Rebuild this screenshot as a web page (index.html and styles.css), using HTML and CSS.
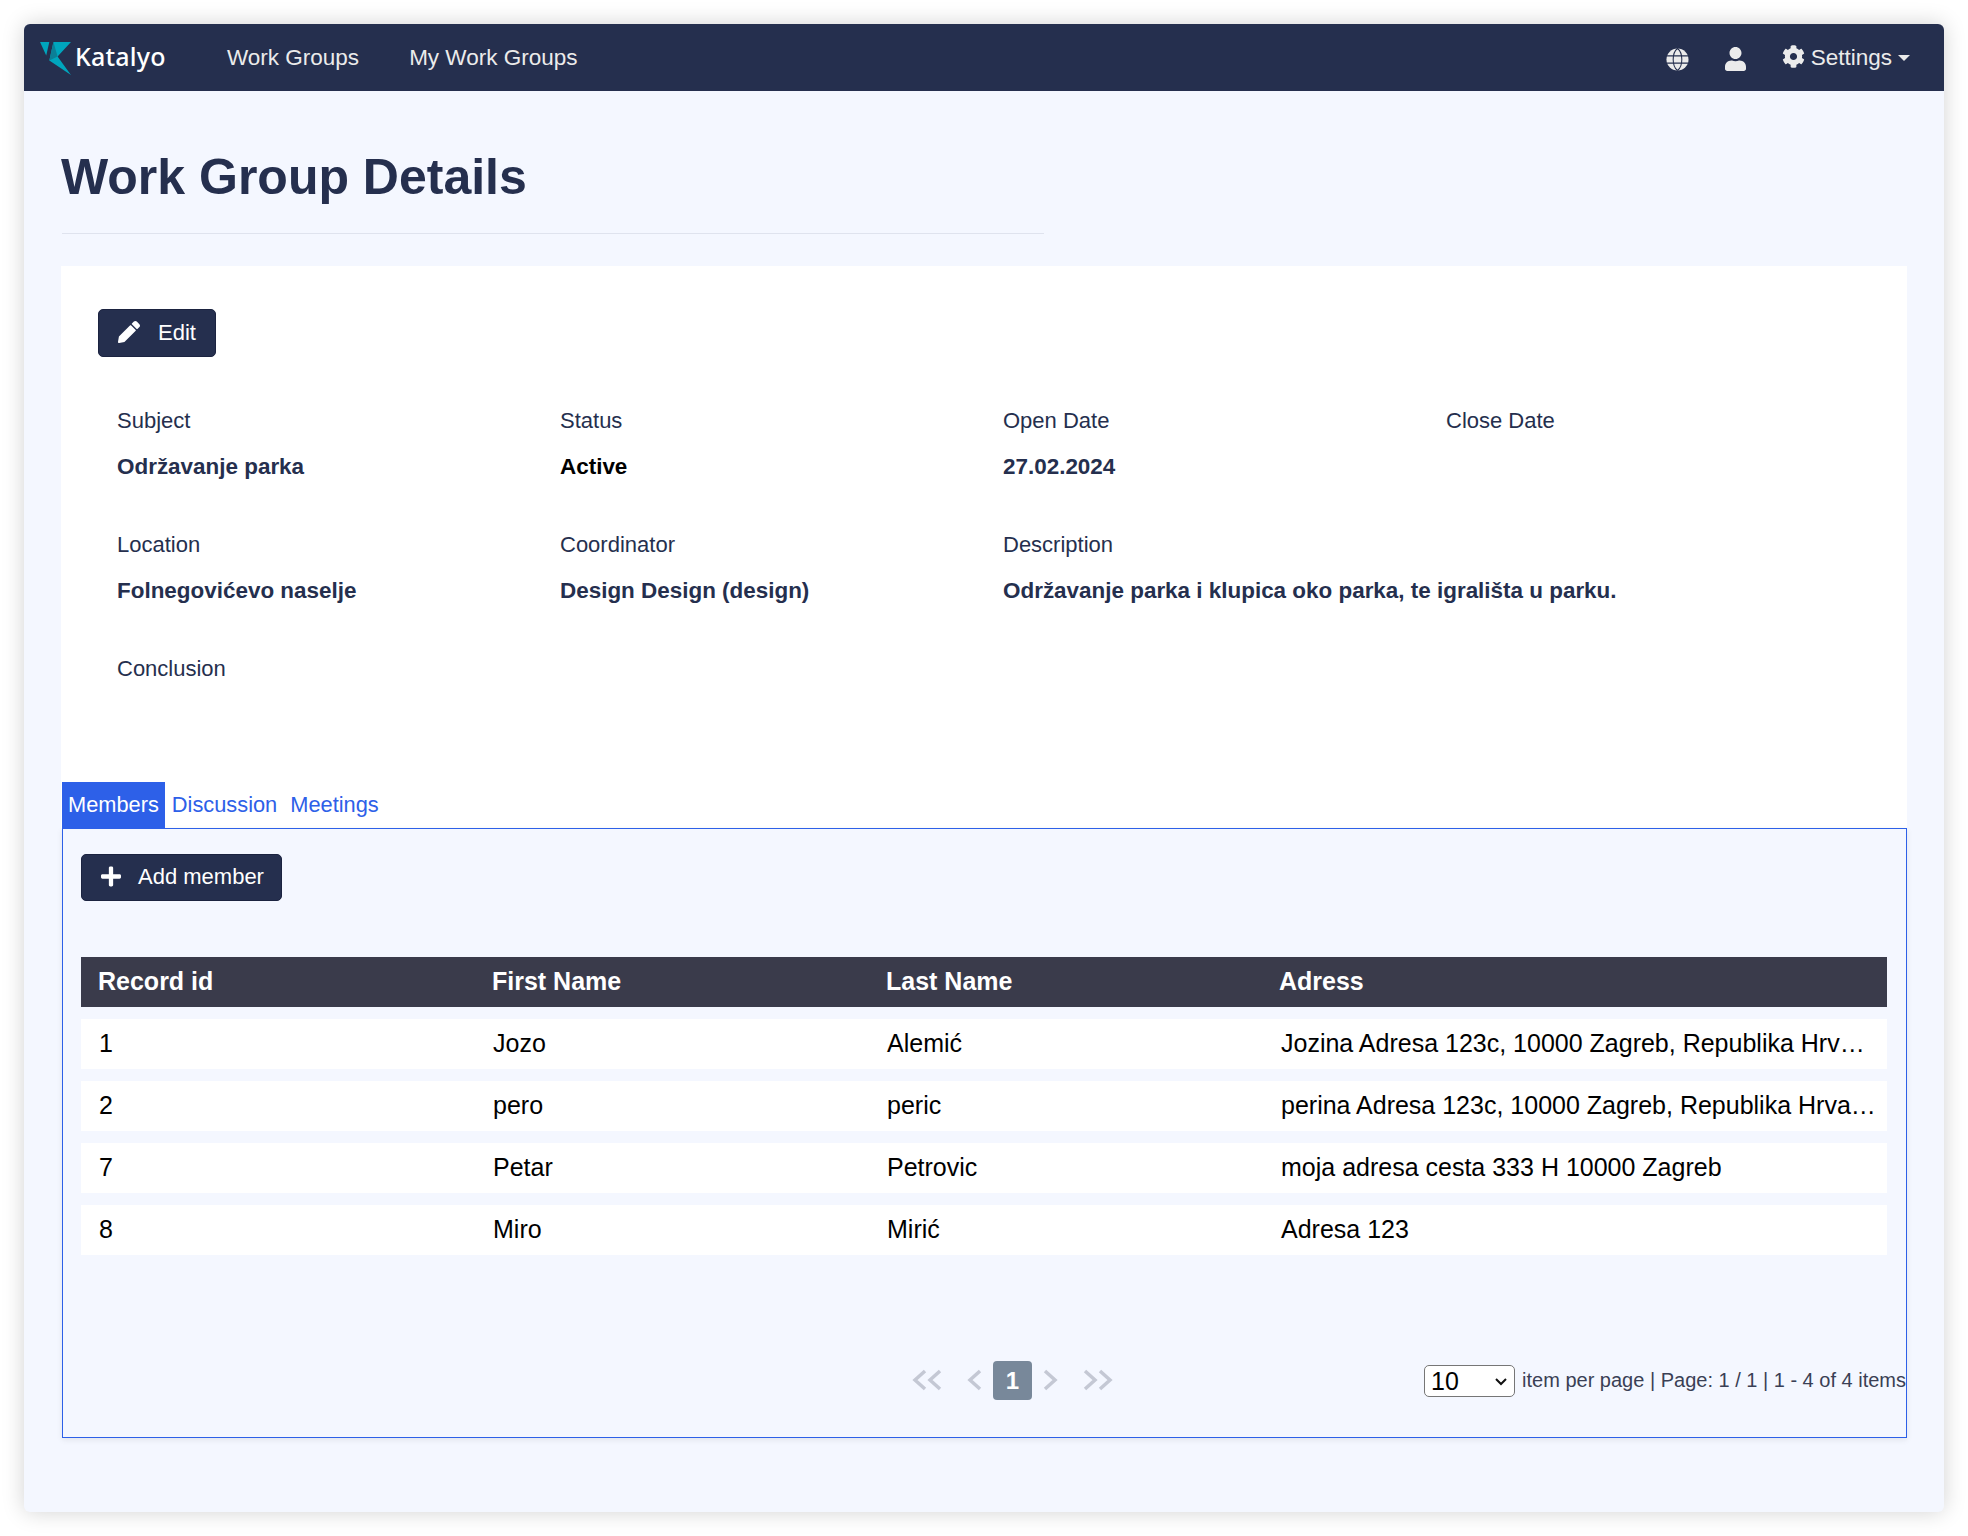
FILE: index.html
```html
<!DOCTYPE html>
<html>
<head>
    <title>Work Group Details</title>
    <link rel="stylesheet" href="styles.css">
</head>
<body>

<div class="app">

    <div class="topbar">
        <div class="brand">
            <svg class="brand-logo" viewBox="0 0 30 32">
                <polygon points="0,0 9,0 6,13" fill="#00a5bd"/>
                <polygon points="13,0 30,0 17,14 30,32 9,18" fill="#00a5bd"/>
                <polygon points="13,0 17,14 9,18" fill="#0b7f97"/>
            </svg>
            <span class="brand-name">Katalyo</span>
        </div>
        <a class="nav-link">Work Groups</a>
        <a class="nav-link">My Work Groups</a>

        <svg class="nav-globe" viewBox="0 0 24 24">
            <circle class="globe-fill" cx="12" cy="12" r="11.5"/>
            <path class="globe-lines" d="M0.5 8.2H23.5M0.5 15.8H23.5M12 0.5C6 5 6 19 12 23.5M12 0.5C18 5 18 19 12 23.5"/>
        </svg>
        <svg class="nav-user" viewBox="0 0 448 512"><path d="M224 256c70.7 0 128-57.3 128-128S294.7 0 224 0 96 57.3 96 128s57.3 128 128 128zm89.6 32h-16.7c-22.2 10.2-46.9 16-72.9 16s-50.6-5.8-72.9-16h-16.7C60.2 288 0 348.2 0 422.4V464c0 26.5 21.5 48 48 48h352c26.5 0 48-21.5 48-48v-41.6c0-74.2-60.2-134.4-134.4-134.4z"/></svg>
        <div class="settings">
            <svg class="nav-cog" viewBox="0 0 512 512"><path d="M487.4 315.7l-42.6-24.6c4.3-23.2 4.3-47 0-70.2l42.6-24.6c4.9-2.8 7.1-8.6 5.5-14-11.1-35.6-30-67.8-54.7-94.6-3.8-4.1-10-5.1-14.8-2.3L380.8 110c-17.9-15.4-38.5-27.3-60.8-35.1V25.8c0-5.6-3.9-10.5-9.4-11.7-36.7-8.2-74.3-7.8-109.2 0-5.5 1.2-9.4 6.1-9.4 11.7V75c-22.2 7.9-42.8 19.8-60.8 35.1L88.7 85.5c-4.9-2.8-11-1.9-14.8 2.3-24.7 26.7-43.6 58.9-54.7 94.6-1.7 5.4.6 11.2 5.5 14L67.3 221c-4.3 23.2-4.3 47 0 70.2l-42.6 24.6c-4.9 2.8-7.1 8.6-5.5 14 11.1 35.6 30 67.8 54.7 94.6 3.8 4.1 10 5.1 14.8 2.3l42.6-24.6c17.9 15.4 38.5 27.3 60.8 35.1v49.2c0 5.6 3.9 10.5 9.4 11.7 36.7 8.2 74.3 7.8 109.2 0 5.5-1.2 9.4-6.1 9.4-11.7v-49.2c22.2-7.9 42.8-19.8 60.8-35.1l42.6 24.6c4.9 2.8 11 1.9 14.8-2.3 24.7-26.7 43.6-58.9 54.7-94.6 1.5-5.5-.7-11.3-5.6-14.1zM256 336c-44.1 0-80-35.9-80-80s35.9-80 80-80 80 35.9 80 80-35.9 80-80 80z"/></svg>
            <span>Settings</span>
            <span class="caret"></span>
        </div>
    </div>

    <div class="content">
        <h1 class="page-title">Work Group Details</h1>

        <div class="details">
            <button class="btn btn-edit">
                <svg class="btn-icon" viewBox="0 0 512 512"><path d="M497.9 142.1l-46.1 46.1c-4.7 4.7-12.3 4.7-17 0l-111-111c-4.7-4.7-4.7-12.3 0-17l46.1-46.1c18.7-18.7 49.1-18.7 67.9 0l60.1 60.1c18.8 18.7 18.8 49.1 0 67.9zM284.2 99.8L21.6 362.4.4 483.9c-2.9 16.4 11.4 30.6 27.8 27.8l121.5-21.3 262.6-262.6c4.7-4.7 4.7-12.3 0-17l-111-111c-4.8-4.7-12.4-4.7-17.1 0z"/></svg>
                Edit
            </button>

            <div class="fields">
                <div class="field">
                    <div class="field-label">Subject</div>
                    <div class="field-value">Održavanje parka</div>
                </div>
                <div class="field">
                    <div class="field-label">Status</div>
                    <div class="field-value field-black">Active</div>
                </div>
                <div class="field">
                    <div class="field-label">Open Date</div>
                    <div class="field-value">27.02.2024</div>
                </div>
                <div class="field">
                    <div class="field-label">Close Date</div>
                </div>
                <div class="field">
                    <div class="field-label">Location</div>
                    <div class="field-value">Folnegovićevo naselje</div>
                </div>
                <div class="field">
                    <div class="field-label">Coordinator</div>
                    <div class="field-value">Design Design (design)</div>
                </div>
                <div class="field field-wide">
                    <div class="field-label">Description</div>
                    <div class="field-value">Održavanje parka i klupica oko parka, te igrališta u parku.</div>
                </div>
                <div class="field">
                    <div class="field-label">Conclusion</div>
                </div>
            </div>

            <div class="tabs">
                <a class="tab tab-active">Members</a>
                <a class="tab">Discussion</a>
                <a class="tab">Meetings</a>
            </div>
        </div>

        <div class="tab-panel">
            <div class="panel-top">
                <button class="btn btn-add">
                    <svg class="btn-icon" viewBox="0 0 448 512"><path d="M416 208H272V64c0-17.67-14.33-32-32-32h-32c-17.67 0-32 14.33-32 32v144H32c-17.67 0-32 14.33-32 32v32c0 17.67 14.33 32 32 32h144v144c0 17.67 14.33 32 32 32h32c17.67 0 32-14.33 32-32V304h144c17.67 0 32-14.33 32-32v-32c0-17.67-14.33-32-32-32z"/></svg>
                    Add member
                </button>

                <table class="members">
                    <thead>
                        <tr><th>Record id</th><th>First Name</th><th>Last Name</th><th class="col-adress">Adress</th></tr>
                    </thead>
                    <tbody>
                        <tr><td>1</td><td>Jozo</td><td>Alemić</td><td>Jozina Adresa 123c, 10000 Zagreb, Republika Hrvatska</td></tr>
                        <tr><td>2</td><td>pero</td><td>peric</td><td>perina Adresa 123c, 10000 Zagreb, Republika Hrvatska</td></tr>
                        <tr><td>7</td><td>Petar</td><td>Petrovic</td><td>moja adresa cesta 333 H 10000 Zagreb</td></tr>
                        <tr><td>8</td><td>Miro</td><td>Mirić</td><td>Adresa 123</td></tr>
                    </tbody>
                </table>
            </div>

            <div class="pager-row">
                <div class="pager">
                    <svg class="chev chev-double" viewBox="0 0 30 22"><polyline points="13,2 3,11 13,20"/><polyline points="28,2 18,11 28,20"/></svg>
                    <svg class="chev chev-single" viewBox="0 0 15 22"><polyline points="13,2 3,11 13,20"/></svg>
                    <span class="page-current">1</span>
                    <svg class="chev chev-single" viewBox="0 0 15 22"><polyline points="2,2 12,11 2,20"/></svg>
                    <svg class="chev chev-double" viewBox="0 0 30 22"><polyline points="2,2 12,11 2,20"/><polyline points="17,2 27,11 17,20"/></svg>
                </div>
                <div class="page-info">
                    <div class="page-size-wrap">
                        <select class="page-size">
                            <option>10</option>
                            <option>25</option>
                            <option>50</option>
                        </select>
                        <svg class="page-size-arrow" viewBox="0 0 12 8"><polyline points="1,1 6,6 11,1"/></svg>
                    </div>
                    <span>item per page | Page: 1 / 1 | 1 - 4 of 4 items</span>
                </div>
            </div>
        </div>
    </div>

</div>

</body>
</html>
```

FILE: styles.css
```css
body{
    margin: 0;
    padding: 24px;
    background-color: white;
    font-family: "Liberation Sans", Arial, sans-serif;
    font-size: 22px;
    color: #252f4e;
}

.app{
    width: 1920px;
    height: 1488px;
    background-color: #f4f7ff;
    border-radius: 6px;
    box-shadow: 0 0 22px rgba(0, 0, 0, 0.18);
    overflow: hidden;
}

/* top bar */
.topbar{
    display: flex;
    align-items: center;
    height: 67px;
    background-color: #252f4e;
    color: #ebebeb;
    padding-left: 16px;
    font-size: 22.5px;
}

.brand{
    display: flex;
    align-items: center;
    width: 187px;
}

.brand-logo{
    width: 31px;
    height: 33px;
    margin-top: 2px;
}

.brand-name{
    font-family: "Noto Sans", sans-serif;
    font-weight: 500;
    font-size: 25px;
    letter-spacing: 0.2px;
    color: white;
    margin-left: 4px;
    margin-top: -4px;
}

.nav-link{
    margin-right: 50px;
}

.nav-globe{
    width: 23px;
    height: 23px;
    margin-left: auto;
    margin-top: 3px;
}

.globe-fill{
    fill: #ebebeb;
}

.globe-lines{
    fill: none;
    stroke: #252f4e;
    stroke-width: 1.1;
}

.nav-user{
    width: 21px;
    height: 24px;
    margin-left: 36px;
    margin-top: 3px;
    fill: #ebebeb;
}

.settings{
    display: flex;
    align-items: center;
    margin-left: 36px;
    margin-right: 34px;
}

.nav-cog{
    width: 23px;
    height: 23px;
    margin-right: 6px;
    margin-top: -3px;
    fill: #ebebeb;
}

.caret{
    width: 0;
    height: 0;
    margin-left: 6px;
    border-left: 6px solid transparent;
    border-right: 6px solid transparent;
    border-top: 6px solid #ebebeb;
}

/* page */
.content{
    padding: 0 37px;
}

.page-title{
    width: 982px;
    margin: 0 0 32px 1px;
    padding: 56px 0 26px 0;
    border-bottom: 1px solid #dfe3ee;
    font-size: 50px;
    line-height: 60px;
    font-weight: bold;
    text-indent: -1px;
}

.details{
    background-color: white;
    padding-top: 43px;
}

.btn{
    display: flex;
    align-items: center;
    background-color: #252f4e;
    color: white;
    border: 1px solid #1b2340;
    border-radius: 5px;
    font-family: "Liberation Sans", Arial, sans-serif;
    font-size: 22px;
}

.btn-edit{
    width: 118px;
    height: 48px;
    margin-left: 37px;
    padding: 0 0 0 19px;
}

.btn-add{
    width: 201px;
    height: 47px;
    padding: 0 0 2px 19px;
}

.btn-icon{
    width: 22px;
    height: 22px;
    margin-right: 18px;
    margin-top: -2px;
    fill: white;
}

.btn-add .btn-icon{
    width: 20px;
    height: 23px;
    margin-right: 17px;
    margin-top: 0;
}

.fields{
    display: grid;
    grid-template-columns: repeat(4, 443px);
    grid-auto-rows: 124px;
    margin: 49px 0 4px 37px;
}

.field{
    padding-left: 19px;
}

.field-wide{
    grid-column: span 2;
}

.field-label{
    line-height: 30px;
    margin-bottom: 16px;
}

.field-value{
    line-height: 30px;
    font-size: 22.45px;
    font-weight: bold;
}

.field-black{
    color: black;
}

/* tabs */
.tabs{
    display: flex;
    height: 46px;
    margin-left: 1px;
}

.tab{
    padding: 0 6px;
    line-height: 45px;
    font-size: 21.8px;
    color: #2d60e8;
}

.tab + .tab{
    margin-left: 1px;
}

.tab-active{
    background-color: #2d60e8;
    color: white;
}

.tab-panel{
    height: 608px;
    margin-left: 1px;
    border: 1px solid #2d60e8;
    box-shadow: 0 2px 6px rgba(0, 0, 0, 0.08);
}

.panel-top{
    padding: 25px 18px 0 18px;
}

/* members table */
.members{
    width: 1806px;
    margin-top: 44px;
    table-layout: fixed;
    border-collapse: separate;
    border-spacing: 0 12px;
    font-size: 25px;
}

.members th{
    width: 394px;
    height: 50px;
    padding: 0 0 2px 17px;
    box-sizing: border-box;
    background-color: #3a3b4b;
    color: white;
    text-align: left;
}

.members th.col-adress{
    width: 624px;
    padding-left: 16px;
}

.members td{
    height: 50px;
    box-sizing: border-box;
    padding: 0 11px 2px 18px;
    background-color: white;
    color: black;
    white-space: nowrap;
    overflow: hidden;
    text-overflow: ellipsis;
}

/* pager */
.pager-row{
    display: flex;
    align-items: center;
    height: 39px;
    margin-top: 94px;
    padding-left: 849px;
}

.pager{
    display: flex;
    align-items: center;
}

.chev{
    height: 22px;
    margin-top: -2px;
    fill: none;
    stroke: #c4c8d4;
    stroke-width: 3.5;
}

.chev-double{
    width: 30px;
}

.chev-single{
    width: 15px;
}

.chev-double + .chev-single{
    margin-left: 25px;
    margin-right: 11px;
}

.chev-single + .chev-double{
    margin-left: 25px;
}

.page-current{
    width: 39px;
    height: 39px;
    margin-right: 11px;
    border-radius: 4px;
    background-color: #78889a;
    color: white;
    font-weight: bold;
    font-size: 24px;
    line-height: 39px;
    text-align: center;
}

.page-info{
    display: flex;
    align-items: center;
    margin-left: auto;
    font-size: 20px;
    color: #3a3f55;
    white-space: nowrap;
}

.page-size-wrap{
    position: relative;
    width: 91px;
    height: 32px;
    margin-right: 7px;
}

.page-size{
    appearance: none;
    width: 91px;
    height: 32px;
    padding: 0 0 0 6px;
    background-color: white;
    border: 1px solid #767676;
    border-radius: 5px;
    font-family: "Liberation Sans", Arial, sans-serif;
    font-size: 25px;
    color: black;
}

.page-size-arrow{
    position: absolute;
    right: 8px;
    top: 13px;
    width: 12px;
    height: 8px;
    fill: none;
    stroke: #111;
    stroke-width: 2;
    pointer-events: none;
}
```
